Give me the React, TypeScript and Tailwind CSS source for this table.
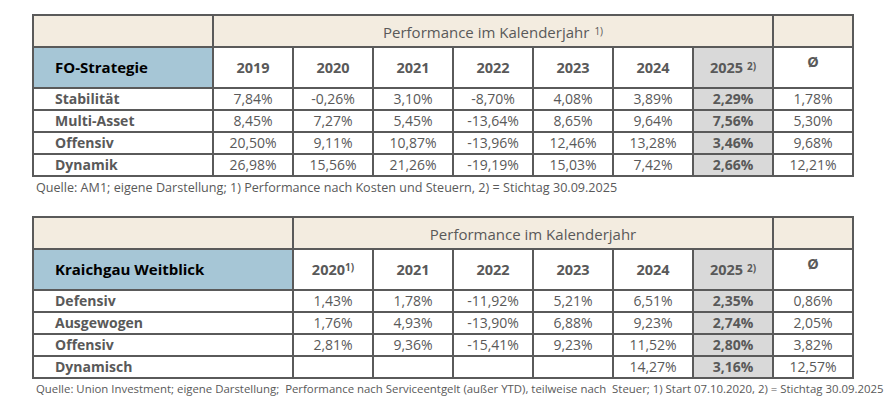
import React from "react";

type Row = { label: string; values: string[]; bold: string; avg: string };

const foRows: Row[] = [
  { label: "Stabilität", values: ["7,84%", "-0,26%", "3,10%", "-8,70%", "4,08%", "3,89%"], bold: "2,29%", avg: "1,78%" },
  { label: "Multi-Asset", values: ["8,45%", "7,27%", "5,45%", "-13,64%", "8,65%", "9,64%"], bold: "7,56%", avg: "5,30%" },
  { label: "Offensiv", values: ["20,50%", "9,11%", "10,87%", "-13,96%", "12,46%", "13,28%"], bold: "3,46%", avg: "9,68%" },
  { label: "Dynamik", values: ["26,98%", "15,56%", "21,26%", "-19,19%", "15,03%", "7,42%"], bold: "2,66%", avg: "12,21%" },
];

const kwRows: Row[] = [
  { label: "Defensiv", values: ["1,43%", "1,78%", "-11,92%", "5,21%", "6,51%"], bold: "2,35%", avg: "0,86%" },
  { label: "Ausgewogen", values: ["1,76%", "4,93%", "-13,90%", "6,88%", "9,23%"], bold: "2,74%", avg: "2,05%" },
  { label: "Offensiv", values: ["2,81%", "9,36%", "-15,41%", "9,23%", "11,52%"], bold: "2,80%", avg: "3,82%" },
  { label: "Dynamisch", values: ["", "", "", "", "14,27%"], bold: "3,16%", avg: "12,57%" },
];

const cell = "border-2 border-[#5a5a5a] p-0";

function PerfTable({
  title,
  firstWidth,
  years,
  headSup,
  rows,
  firstYearSup,
}: {
  title: string;
  firstWidth: number;
  years: string[];
  headSup?: string;
  rows: Row[];
  firstYearSup?: boolean;
}) {
  return (
    <table
      className="table-fixed border-collapse text-[14px] text-[#595959]"
      style={{ width: firstWidth + (years.length + 2) * 80 + 2 }}
    >
      <colgroup>
        <col style={{ width: firstWidth }} />
        {years.map((y) => (
          <col key={y} className="w-[80px]" />
        ))}
        <col className="w-[80px]" />
        <col className="w-[80px]" />
      </colgroup>
      <tbody>
        <tr className="h-[32px] bg-[#f3ece0]">
          <td className={cell}></td>
          <td className={`${cell} text-center align-middle text-[15px] pt-[2px]`} colSpan={years.length + 1}>
            Performance im Kalenderjahr
            {headSup && <sup className="ml-[5px] text-[10px] relative -top-[3px]">{headSup}</sup>}
          </td>
          <td className={cell}></td>
        </tr>
        <tr className="h-[41px]">
          <td className={`${cell} bg-[#a6c6d6] pl-[21px] font-bold text-black text-[15px]`}>{title}</td>
          {years.map((y, i) => (
            <td key={y} className={`${cell} text-center font-bold text-[14.5px]`}>
              {y}
              {firstYearSup && i === 0 && <sup className="text-[10px] relative -top-[4px]">1)</sup>}
            </td>
          ))}
          <td className={`${cell} bg-[#d9d9d9] text-center font-bold text-[14.5px]`}>
            2025
            <sup className="ml-[4px] text-[10px] relative -top-[3px]">2)</sup>
          </td>
          <td className={`${cell} text-center font-bold text-[14.5px] align-top`}>
            <div className="pt-[3px]">Ø</div>
          </td>
        </tr>
        {rows.map((r) => (
          <tr key={r.label} className="h-[22px] leading-[18px]">
            <td className={`${cell} pl-[21px] font-bold`}>{r.label}</td>
            {r.values.map((v, i) => (
              <td key={i} className={`${cell} text-center`}>
                {v}
              </td>
            ))}
            <td className={`${cell} bg-[#d9d9d9] text-center font-bold`}>{r.bold}</td>
            <td className={`${cell} text-center`}>{r.avg}</td>
          </tr>
        ))}
      </tbody>
    </table>
  );
}

export default function App() {
  return (
    <div className="w-[891px] h-[409px] bg-white pl-[32px] pt-[14px] font-['Open_Sans',sans-serif]">
      <PerfTable
        title="FO-Strategie"
        firstWidth={180}
        years={["2019", "2020", "2021", "2022", "2023", "2024"]}
        headSup="1)"
        rows={foRows}
      />
      <p className="mt-[2px] pl-[4px] text-[12.6px] leading-[17px] text-[#595959]">
        Quelle: AM1; eigene Darstellung; 1) Performance nach Kosten und Steuern, 2) = Stichtag 30.09.2025
      </p>
      <div className="mt-[20px]">
        <PerfTable
          title="Kraichgau Weitblick"
          firstWidth={260}
          years={["2020", "2021", "2022", "2023", "2024"]}
          rows={kwRows}
          firstYearSup
        />
      </div>
      <p className="mt-[2px] pl-[4px] text-[11.4px] leading-[16px] text-[#595959] whitespace-pre">
        {"Quelle: Union Investment; eigene Darstellung;  Performance nach Serviceentgelt (außer YTD), teilweise nach  Steuer; 1) Start 07.10.2020, 2) = Stichtag 30.09.2025"}
      </p>
    </div>
  );
}
